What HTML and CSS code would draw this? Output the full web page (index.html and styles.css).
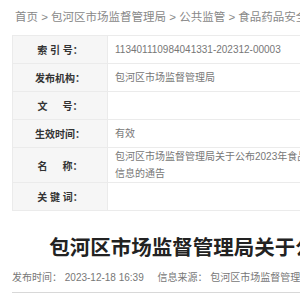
FILE: index.html
```html
<!DOCTYPE html>
<html>
<head lang="zh-CN">
    <meta charset="UTF-8">
    <title>包河区市场监督管理局关于公布2023年食品安全监督抽检信息的通告</title>
    <link rel="stylesheet" href="styles.css">
</head>
<body>
<div class="crumb">
    <a href="#">首页</a><span class="sep"> &gt; </span><a href="#">包河区市场监督管理局</a><span class="sep"> &gt; </span><a href="#">公共监管</a><span class="sep"> &gt; </span><a href="#">食品药品安全监管</a>
</div>
<div class="main">
    <table class="info">
        <tr><th>索 引 号：</th><td>113401110984041331-202312-00003</td></tr>
        <tr><th>发布机构：</th><td>包河区市场监督管理局</td></tr>
        <tr><th>文&emsp;&ensp;号：</th><td></td></tr>
        <tr><th>生效时间：</th><td>有效</td></tr>
        <tr class="tall"><th>名&emsp;&ensp;称：</th><td>包河区市场监督管理局关于公布2023年食品安全监督抽检<br>信息的通告</td></tr>
        <tr><th>关 键 词：</th><td></td></tr>
    </table>
    <h1 class="title">包河区市场监督管理局关于公布2023年食品安全监督抽检信息的通告</h1>
    <div class="meta">
        <span class="time">发布时间： 2023-12-18 16:39</span>
        <span class="source">信息来源： 包河区市场监督管理局</span>
    </div>
</div>
</body>
</html>
```
FILE: styles.css
```css
html, body{ margin: 0; padding: 0; background: #fff; overflow: hidden;}
body{ width: 1000px; font-family: "Liberation Sans", "Noto Sans CJK SC", sans-serif; color: #666;}
a{ color: #888; text-decoration: none;}

.crumb{ height: 35px; line-height: 35px; padding-left: 15px; font-size: 11.5px; color: #888; white-space: nowrap;}

.main{ width: 694px; margin-left: 12px;}

.info{ width: 100%; border-collapse: collapse; font-size: 10px;}
.info th, .info td{ border: 1px solid #ebebeb; height: 27px; padding: 0;}
.info th{ width: 94px; background: #f6f6f6; color: #333; font-weight: bold; text-align: center;}
.info td{ padding-left: 7px; color: #777; text-align: left; line-height: 17px;}
.info tr.tall td, .info tr.tall th{ height: 31px;}

.title{ margin: 25px 0 0; font-size: 20.5px; line-height: 24px; color: #222; font-weight: bold; text-align: center;}

.meta{ margin-top: 10px; height: 22px; line-height: 16px; font-size: 10px; color: #777; border-bottom: 1px solid #d8d8d8;}
.meta .source{ margin-left: 11px;}
```
